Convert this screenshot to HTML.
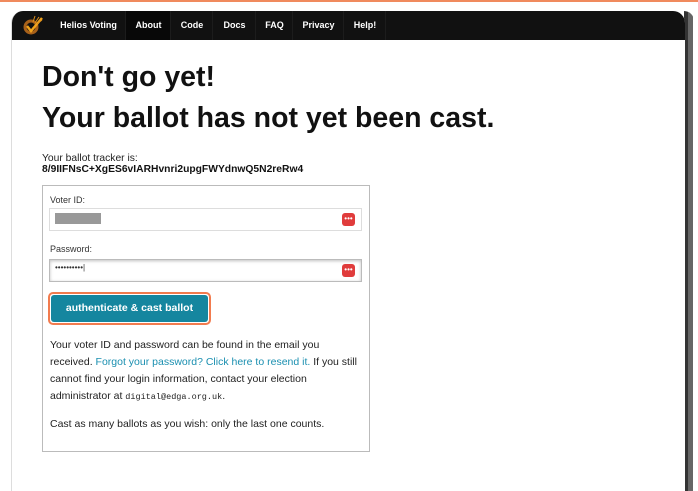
<!DOCTYPE html>
<html><head><style>
body{margin:0;width:698px;height:479px;background:#fff;position:relative;overflow:hidden;font-family:"Liberation Sans",Arial,sans-serif;}
.topline{position:absolute;left:0;top:0;width:698px;height:2px;background:#f08a5d;}
.frame{position:absolute;left:11px;top:11px;width:673px;height:480px;background:#fff;border-left:1px solid #ddd;border-radius:12px 12px 0 0;overflow:hidden;}
.rb{position:absolute;left:684px;top:11px;width:10px;height:480px;background:linear-gradient(90deg,#333 0,#333 4px,#666 4px,#666 9px,#fff 9px);border-radius:0 12px 0 0;}
.nav{position:absolute;left:0;top:0;width:673px;height:29px;background:#111;}
.nav span{position:absolute;top:0;height:29px;line-height:29px;color:#fff;font-weight:bold;font-size:9px;border-left:1px solid #1c1c1c;text-align:center;}
h1{position:absolute;left:30px;margin:0;font-size:28.5px;font-weight:bold;color:#111;}
.sm{position:absolute;font-size:10.3px;color:#222;}
.box{position:absolute;left:30px;top:174px;width:326px;height:265px;border:1px solid #bbb;}
.lab{position:absolute;left:7px;font-size:9px;color:#333;}
.inp{position:absolute;left:6px;width:311px;height:21px;border:1px solid #ddd;background:#fff;}
.key{position:absolute;right:6px;top:4px;width:13px;height:13px;background:#e03c3c;border-radius:3px;color:#fff;font-size:8px;line-height:11px;text-align:center;}
.btn{position:absolute;left:5px;top:106px;width:159px;height:29px;border:2px solid #f27b4e;border-radius:5px;}
.btn div{position:absolute;left:1px;top:1px;right:1px;bottom:1px;background:#15869f;border-radius:3px;color:#fff;font-weight:bold;font-size:10.5px;text-align:center;line-height:27px;}
.p{position:absolute;left:7px;font-size:10.5px;color:#222;line-height:17px;width:309px;}
a{color:#1a8fb0;text-decoration:none;}
code{font-family:"Liberation Mono",monospace;font-size:8.5px;}
</style></head><body>
<div class="topline"></div>
<div class="rb"></div>
<div class="frame">
 <div class="nav">
  <svg style="position:absolute;left:9px;top:3px" width="24" height="22" viewBox="0 0 24 22">
   <circle cx="10" cy="13" r="6" fill="none" stroke="#a8611a" stroke-width="3"/>
   <path d="M6 12 L10 17 L21 4" fill="none" stroke="#f2a31c" stroke-width="2.5"/>
   <path d="M12 8 L14 2 M14 9 L18 3 M16 10 L21 6" stroke="#e0901a" stroke-width="1"/>
  </svg>
  <span style="left:40px;width:73px;border:none">Helios Voting</span>
  <span style="left:113px;width:45px;background:#080808">About</span>
  <span style="left:158px;width:42px">Code</span>
  <span style="left:200px;width:43px">Docs</span>
  <span style="left:243px;width:37px">FAQ</span>
  <span style="left:280px;width:51px">Privacy</span>
  <span style="left:331px;width:42px">Help!</span>
  <span style="left:373px;width:1px"></span>
 </div>
 <h1 style="top:50px">Don't go yet!</h1>
 <h1 style="top:91px">Your ballot has not yet been cast.</h1>
 <div class="sm" style="left:30px;top:142px">Your ballot tracker is:</div>
 <div class="sm" style="left:30px;top:153px;font-weight:bold;color:#111">8/9IIFNsC+XgES6vIARHvnri2upgFWYdnwQ5N2reRw4</div>
 <div class="box">
  <div class="lab" style="top:9px">Voter ID:</div>
  <div class="inp" style="top:22px"><div style="position:absolute;left:5px;top:4px;width:46px;height:11px;background:#999"></div><div class="key">•••</div></div>
  <div class="lab" style="top:58px">Password:</div>
  <div class="inp" style="top:73px;border-color:#bbb;box-shadow:inset 0 1px 3px rgba(0,0,0,.25)"><div style="position:absolute;left:5px;top:3px;font-size:8px;color:#333">••••••••••|</div><div class="key">•••</div></div>
  <div class="btn"><div>authenticate &amp; cast ballot</div></div>
  <div class="p" style="top:151px">Your voter ID and password can be found in the email you received. <a>Forgot your password? Click here to resend it.</a> If you still cannot find your login information, contact your election administrator at <code>digital@edga.org.uk</code>.</div>
  <div class="p" style="top:230px">Cast as many ballots as you wish: only the last one counts.</div>
 </div>
</div>
</body></html>
